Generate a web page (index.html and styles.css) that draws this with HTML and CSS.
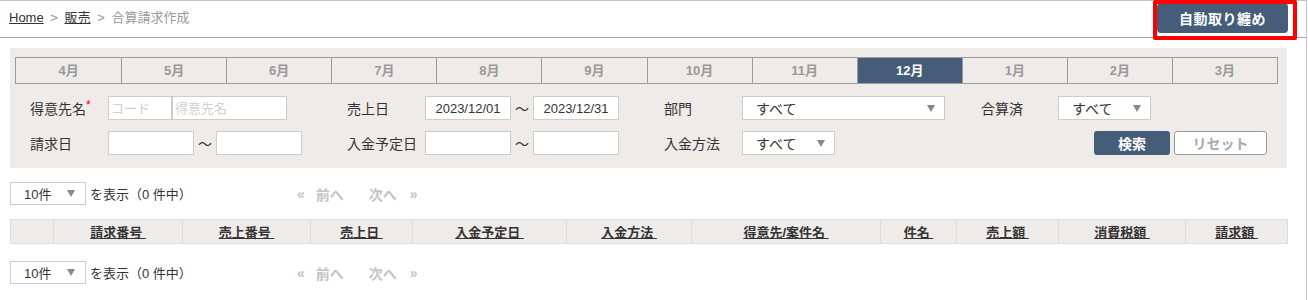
FILE: index.html
```html
<!DOCTYPE html>
<html lang="ja">
<head>
    <meta charset="UTF-8">
    <meta name="viewport" content="width=device-width, initial-scale=1.0">
    <title>合算請求作成</title>
    <link rel="stylesheet" href="styles.css">
</head>
<body>
    <div class="page">

        <header class="topbar">
            <nav class="crumbs">
                <a href="#">Home</a>
                <span class="sep">&gt;</span>
                <a href="#">販売</a>
                <span class="sep">&gt;</span>
                <span class="current">合算請求作成</span>
            </nav>
            <button class="btn-auto" type="button">自動取り纏め</button>
            <div class="highlight"></div>
        </header>

        <main class="content">

            <section class="search-panel">
                <ul class="months">
                    <li>4月</li>
                    <li>5月</li>
                    <li>6月</li>
                    <li>7月</li>
                    <li>8月</li>
                    <li>9月</li>
                    <li>10月</li>
                    <li>11月</li>
                    <li class="active">12月</li>
                    <li>1月</li>
                    <li>2月</li>
                    <li>3月</li>
                </ul>

                <form class="filters" action="">
                    <div class="field">
                        <label>得意先名<span class="req">*</span></label>
                        <input type="text" class="input-code" placeholder="コード">
                        <input type="text" class="input-name" placeholder="得意先名">
                    </div>
                    <div class="field">
                        <label>売上日</label>
                        <input type="text" class="input-date" value="2023/12/01">
                        <span class="tilde">～</span>
                        <input type="text" class="input-date" value="2023/12/31">
                    </div>
                    <div class="field">
                        <label>部門</label>
                        <div class="select select-wide"><span>すべて</span><i class="arrow"></i></div>
                    </div>
                    <div class="field">
                        <label class="label-short">合算済</label>
                        <div class="select select-small"><span>すべて</span><i class="arrow"></i></div>
                    </div>

                    <div class="field">
                        <label>請求日</label>
                        <input type="text" class="input-date">
                        <span class="tilde">～</span>
                        <input type="text" class="input-date">
                    </div>
                    <div class="field">
                        <label>入金予定日</label>
                        <input type="text" class="input-date">
                        <span class="tilde">～</span>
                        <input type="text" class="input-date">
                    </div>
                    <div class="field">
                        <label>入金方法</label>
                        <div class="select select-small"><span>すべて</span><i class="arrow"></i></div>
                    </div>
                    <div class="field field-buttons">
                        <button type="button" class="btn-search">検索</button>
                        <button type="reset" class="btn-reset">リセット</button>
                    </div>
                </form>
            </section>

            <div class="pager">
                <div class="select select-count"><span>10件</span><i class="arrow"></i></div>
                <span class="pager-text">を表示（0 件中）</span>
                <span class="pg pg-first">«</span>
                <span class="pg pg-prev">前へ</span>
                <span class="pg pg-next">次へ</span>
                <span class="pg">»</span>
            </div>

            <table class="list">
                <colgroup>
                    <col class="c-check">
                    <col class="c-no">
                    <col class="c-sale">
                    <col class="c-date">
                    <col class="c-plan">
                    <col class="c-method">
                    <col class="c-client">
                    <col class="c-subject">
                    <col class="c-amount">
                    <col class="c-tax">
                    <col class="c-total">
                </colgroup>
                <thead>
                    <tr>
                        <th></th>
                        <th><a href="#">請求番号&nbsp;</a></th>
                        <th><a href="#">売上番号&nbsp;</a></th>
                        <th><a href="#">売上日&nbsp;</a></th>
                        <th><a href="#">入金予定日&nbsp;</a></th>
                        <th><a href="#">入金方法&nbsp;</a></th>
                        <th><a href="#">得意先/案件名&nbsp;</a></th>
                        <th><a href="#">件名&nbsp;</a></th>
                        <th><a href="#">売上額&nbsp;</a></th>
                        <th><a href="#">消費税額&nbsp;</a></th>
                        <th><a href="#">請求額&nbsp;</a></th>
                    </tr>
                </thead>
                <tbody></tbody>
            </table>

            <div class="pager pager-bottom">
                <div class="select select-count"><span>10件</span><i class="arrow"></i></div>
                <span class="pager-text">を表示（0 件中）</span>
                <span class="pg pg-first">«</span>
                <span class="pg pg-prev">前へ</span>
                <span class="pg pg-next">次へ</span>
                <span class="pg">»</span>
            </div>

        </main>
    </div>
</body>
</html>
```

FILE: styles.css
```css
* {
    box-sizing: border-box;
}

body {
    margin: 0;
    font-family: "Liberation Sans", "Noto Sans CJK JP", sans-serif;
    font-size: 13px;
    color: #333;
    background: #fff;
}

.page {
    width: 1307px;
    min-height: 100vh;
    border-top: 1px solid #c4c4c4;
    border-right: 1px solid #c4c4c4;
}

/* header */
.topbar {
    position: relative;
    height: 37px;
    display: flex;
    justify-content: space-between;
    align-items: flex-start;
    padding: 2px 18px 0 9px;
    border-bottom: 1px solid #a8a8a8;
}

.crumbs {
    padding-top: 5px;
    line-height: 20px;
    color: #999;
}
.crumbs a {
    color: #333;
}
.crumbs .sep {
    margin: 0 3px;
}

.btn-auto {
    width: 131px;
    height: 30px;
    border: none;
    border-radius: 4px;
    background: #465d79;
    color: #fff;
    font-family: inherit;
    font-size: 14px;
    font-weight: bold;
    letter-spacing: 0.5px;
}

/* red annotation frame */
.highlight {
    position: absolute;
    left: 1153px;
    top: -1px;
    width: 144px;
    height: 40px;
    border: 4px solid #f00;
    border-radius: 2px;
}

.content {
    padding: 10px 19px 0 10px;
}

/* search area */
.search-panel {
    background: #eeebe9;
    padding: 9px 0 13px 0;
}

.months {
    list-style: none;
    margin: 0 9px 0 5px;
    padding: 0;
    display: grid;
    grid-template-columns: repeat(12, 1fr);
    border: 1px solid #9c9c9c;
}
.months li {
    height: 25px;
    line-height: 25px;
    text-align: center;
    font-weight: bold;
    color: #999;
    border-left: 1px solid #9c9c9c;
}
.months li:first-child {
    border-left: none;
}
.months li.active {
    background: #465d79;
    color: #fff;
}

.filters {
    margin: 12px 0 0 0;
    padding: 0 20px;
    display: grid;
    grid-template-columns: 317px 317px 317px 1fr;
    row-gap: 11px;
}

.field {
    display: flex;
    align-items: center;
    height: 24px;
}
.field label {
    width: 78px;
    font-size: 14px;
}
.field .label-short {
    width: 77px;
}
.req {
    color: #e00;
    font-size: 12px;
    vertical-align: top;
}

.field input {
    height: 24px;
    border: 1px solid #ccc;
    background: #fff;
    padding: 0 2px;
    font-family: inherit;
    font-size: 13px;
    color: #333;
    outline: none;
}
.field input::placeholder {
    color: #d0d0d0;
}
.input-code {
    width: 64px;
}
.input-name {
    width: 115px;
}
.input-date {
    width: 86px;
    text-align: center;
}
.tilde {
    width: 22px;
    text-align: center;
    font-size: 14px;
}

.select {
    height: 24px;
    display: flex;
    align-items: center;
    justify-content: space-between;
    padding: 0 9px 0 13px;
    border: 1px solid #ccc;
    background: #fff;
    font-size: 14px;
}
.select-wide {
    width: 203px;
}
.select-small {
    width: 93px;
}
.arrow {
    width: 0;
    height: 0;
    border-left: 4px solid transparent;
    border-right: 4px solid transparent;
    border-top: 7px solid #888;
}

.field-buttons {
    justify-content: flex-end;
    gap: 4px;
}
.btn-search,
.btn-reset {
    height: 24px;
    border-radius: 3px;
    font-family: inherit;
    font-size: 14px;
    font-weight: bold;
}
.btn-search {
    width: 76px;
    border: none;
    background: #465d79;
    color: #fff;
}
.btn-reset {
    width: 93px;
    border: 1px solid #999;
    background: #fff;
    color: #aaa;
}

/* pager */
.pager {
    margin-top: 14px;
    display: flex;
    align-items: center;
    height: 23px;
}
.pager-bottom {
    margin-top: 17px;
}
.select-count {
    width: 76px;
    height: 23px;
    font-size: 13px;
    padding: 0 10px 0 13px;
}
.pager-text {
    margin-left: 4px;
    font-size: 13px;
    width: 207px;
}
.pg {
    color: #c4c4c4;
    font-size: 14px;
    font-weight: bold;
}
.pg-first {
    margin-right: 11px;
}
.pg-prev {
    margin-right: 25px;
}
.pg-next {
    margin-right: 13px;
}

/* list table */
.list {
    margin-top: 14px;
    width: 100%;
    border-collapse: collapse;
    table-layout: fixed;
}
.list th {
    height: 24px;
    padding: 0;
    background: #eeebe9;
    border: 1px solid #dcdcdc;
    font-size: 13px;
    font-weight: bold;
}
.list th a {
    color: #333;
}

.c-check { width: 43px; }
.c-no { width: 129px; }
.c-sale { width: 128px; }
.c-date { width: 102px; }
.c-plan { width: 154px; }
.c-method { width: 125px; }
.c-client { width: 189px; }
.c-subject { width: 76px; }
.c-amount { width: 102px; }
.c-tax { width: 127px; }
.c-total { width: 102px; }
```
